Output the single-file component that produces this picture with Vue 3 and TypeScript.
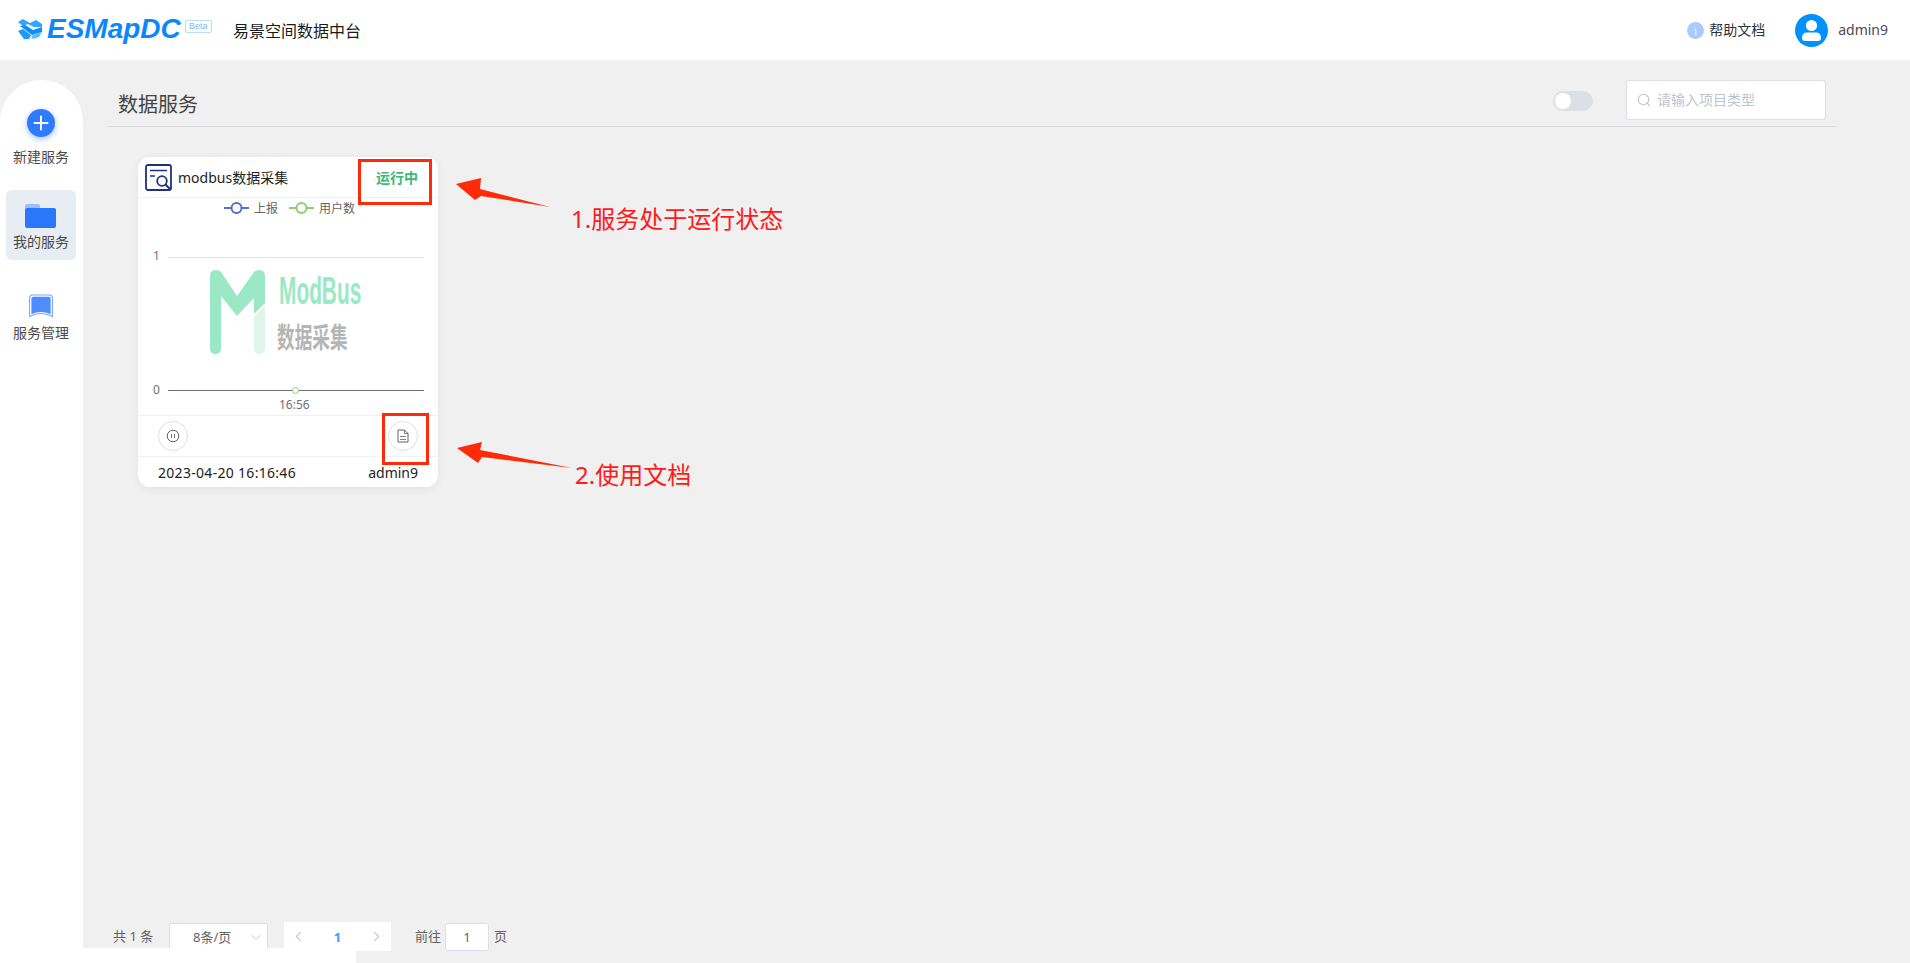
<script setup lang="ts">
const navItems = [
  { key: 'new', label: '新建服务' },
  { key: 'mine', label: '我的服务' },
  { key: 'manage', label: '服务管理' },
]
</script>

<template>
  <div class="page">
    <header class="topbar">
      <div class="brand">
        <svg class="brand-mark" viewBox="0 0 26 22" width="26" height="22">
          <path d="M1 4 L6 1 L13 5 L19 2 L25 6 L25 9 L17 9 L11 6 L6 8 Z" fill="#2fa6ff" />
          <path d="M3 8 L8 7 L16 12 L25 9 L25 14 L15 17 Z" fill="#0d8bff" />
          <path d="M1 13 L6 11 L14 17 L12 21 L7 21 Z" fill="#1c9bff" />
          <path d="M14 18 L25 14 L22 19 L16 21 Z" fill="#52bdff" />
        </svg>
        <span class="brand-name">ESMapDC</span>
        <span class="brand-beta">Beta</span>
      </div>
      <span class="brand-title">易景空间数据中台</span>
      <div class="topbar-right">
        <span class="help">
          <span class="help-dot">i</span>
          <span class="help-text">帮助文档</span>
        </span>
        <svg class="avatar" viewBox="0 0 33 33" width="33" height="33">
          <circle cx="16.5" cy="16.5" r="16.5" fill="#0090ff" />
          <circle cx="16.5" cy="11.5" r="5.6" fill="#fff" />
          <path d="M7 24 Q7 18.500 12 18.500 H21 Q26 18.500 26 24 Q26 27 23 27 H10 Q7 27 7 24 Z" fill="#fff" />
        </svg>
        <span class="user">admin9</span>
      </div>
    </header>

    <div class="body">
      <aside class="sidebar">
        <div
          v-for="item in navItems"
          :key="item.key"
          class="nav-item"
          :class="['nav-' + item.key, { active: item.key === 'mine' }]"
        >
          <span v-if="item.key === 'new'" class="plus">
            <svg viewBox="0 0 16 16" width="16" height="16">
              <path d="M8 1.500 V14.500 M1.500 8 H14.500" stroke="#fff" stroke-width="2" stroke-linecap="round" />
            </svg>
          </span>
          <svg v-else-if="item.key === 'mine'" viewBox="0 0 32 24" width="32" height="24">
            <path d="M0 2 Q0 0 2 0 H13 Q15 0 15 2 V6 H0 Z" fill="#9dbdf9" />
            <rect x="0" y="4" width="31" height="20" rx="2" fill="#2b77fb" />
          </svg>
          <svg v-else viewBox="0 0 26 24" width="26" height="24">
            <path d="M1.600 4 Q1.600 1 4.600 1 H21.400 Q24.400 1 24.400 4 V22.600 Q18 19.500 13 19.500 Q8 19.500 1.600 22.600 Z" fill="none" stroke="#7aa5fc" stroke-width="1.100" />
            <path d="M3.400 4.500 Q3.400 2.800 5 2.800 H21 Q22.600 2.800 22.600 4.500 V20.300 Q17.500 18 13 18 Q8.500 18 3.400 20.300 Z" fill="#4f8dff" />
          </svg>
          <span class="nav-label">{{ item.label }}</span>
        </div>
      </aside>

      <main class="main">
        <div class="titlebar">
          <h1 class="title">数据服务</h1>
          <span class="switch"><span class="switch-knob"></span></span>
          <div class="search">
            <svg viewBox="0 0 14 14" width="14" height="14">
              <circle cx="6.500" cy="6.500" r="5.200" fill="none" stroke="#c0c4cc" stroke-width="1.100" />
              <path d="M10.300 10.300 L12.800 12.800" stroke="#c0c4cc" stroke-width="1.100" stroke-linecap="round" />
            </svg>
            <span class="search-text">请输入项目类型</span>
          </div>
        </div>

        <div class="cards">
          <article class="card">
            <div class="card-head">
              <svg viewBox="0 0 27 27" width="27" height="27">
                <rect x="1" y="1" width="25" height="25" rx="2" fill="none" stroke="#20307e" stroke-width="1.800" />
                <path d="M5 6.500 H22 M5 12 H10" stroke="#20307e" stroke-width="1.600" />
                <circle cx="17" cy="17" r="4.800" fill="none" stroke="#20307e" stroke-width="1.800" />
                <path d="M20.500 20.500 L25 25" stroke="#20307e" stroke-width="2" />
              </svg>
              <span class="card-name">modbus数据采集</span>
              <span class="card-status">运行中</span>
            </div>

            <div class="legend">
              <span class="legend-item">
                <svg viewBox="0 0 25 12" width="25" height="12">
                  <path d="M0 6 H25" stroke="#5470c6" stroke-width="2" />
                  <circle cx="12.500" cy="6" r="5" fill="#fff" stroke="#5470c6" stroke-width="2" />
                </svg>
                上报
              </span>
              <span class="legend-item">
                <svg viewBox="0 0 25 12" width="25" height="12">
                  <path d="M0 6 H25" stroke="#91cc75" stroke-width="2" />
                  <circle cx="12.500" cy="6" r="5" fill="#fff" stroke="#91cc75" stroke-width="2" />
                </svg>
                用户数
              </span>
            </div>

            <div class="chart">
              <div class="axis-row axis-top">
                <span class="axis-num">1</span>
                <span class="grid-line"></span>
              </div>
              <div class="watermark">
                <svg viewBox="0 0 55 84" width="55" height="84">
                  <path d="M55 36 V78 Q55 84 49.500 84 Q44 84 44 78 V47 Z" fill="#dff5ea" />
                  <path d="M0 6 Q0 0 6 0 Q9 0 11 2 L27 26 L44 2 Q46 0 49 0 Q55 0 55 6 V33 L44 44 V28 L27 46 L11 26 V78 Q11 84 5.500 84 Q0 84 0 78 Z" fill="#9be8c6" />
                </svg>
                <div class="watermark-text">
                  <span class="wm-en">ModBus</span>
                  <span class="wm-cn">数据采集</span>
                </div>
              </div>
              <div class="axis-row axis-bottom">
                <span class="axis-num">0</span>
                <span class="base-line"><span class="point"></span></span>
              </div>
              <div class="axis-time">16:56</div>
            </div>

            <div class="card-actions">
              <span class="round-btn">
                <svg viewBox="0 0 14 14" width="14" height="14">
                  <circle cx="7" cy="7" r="5.800" fill="none" stroke="#606266" stroke-width="1" />
                  <path d="M5.500 5 V9 M8.500 5 V9" stroke="#606266" stroke-width="0.900" />
                </svg>
              </span>
              <span class="round-btn">
                <svg viewBox="0 0 12 14" width="12" height="14">
                  <path d="M1 1 H7.500 L11 4.500 V13 H1 Z" fill="none" stroke="#606266" stroke-width="1" />
                  <path d="M7.500 1 V4.500 H11 M3 7.500 H9 M3 10.500 H9" fill="none" stroke="#606266" stroke-width="0.800" />
                </svg>
              </span>
            </div>

            <div class="card-foot">
              <span class="card-date">2023-04-20 16:16:46</span>
              <span>admin9</span>
            </div>
          </article>
        </div>

        <div class="pagination">
          <span class="total">共 1 条</span>
          <span class="size-select">
            8条/页
            <svg viewBox="0 0 12 8" width="10" height="7">
              <path d="M1 1.500 L6 6.500 L11 1.500" fill="none" stroke="#c0c4cc" stroke-width="1.100" />
            </svg>
          </span>
          <span class="pager">
            <svg viewBox="0 0 8 12" width="7" height="11">
              <path d="M6.500 1 L1.500 6 L6.500 11" fill="none" stroke="#c0c4cc" stroke-width="1.300" />
            </svg>
            <b class="pager-current">1</b>
            <svg viewBox="0 0 8 12" width="7" height="11">
              <path d="M1.500 1 L6.500 6 L1.500 11" fill="none" stroke="#c0c4cc" stroke-width="1.300" />
            </svg>
          </span>
          <span class="jump">前往</span>
          <span class="jump-input">1</span>
          <span class="jump-unit">页</span>
        </div>
      </main>
    </div>

    <div class="bottom-strip"></div>

    <!-- Annotations painted over the screenshot -->
    <div class="mark mark-status"></div>
    <div class="mark mark-doc"></div>
    <svg class="arrows" viewBox="0 0 1910 963" width="1910" height="963">
      <path d="M456 184 L481 178 L480 189 L550 207 L481 196 L475 200 Z" fill="#ff2a08" />
      <path d="M457 448 L482 442 L480 450 L572 468 L482 457 L478 463 Z" fill="#ff2a08" />
    </svg>
    <span class="note note-status">1.服务处于运行状态</span>
    <span class="note note-doc">2.使用文档</span>
  </div>
</template>

<style>
html,
body {
  margin: 0;
  overflow: hidden;
  background: #f0f0f0;
}
</style>

<style scoped>
.page {
  position: relative;
  display: flex;
  flex-direction: column;
  height: 963px;
  overflow: hidden;
  background: #f0f0f0;
  font-family: "Noto Sans", "Noto Sans CJK SC", sans-serif;
  color: #303133;
}

.topbar {
  display: flex;
  align-items: center;
  flex: none;
  height: 60px;
  padding: 0 22px 0 17px;
  background: #fff;
  box-sizing: border-box;
}
.brand {
  display: flex;
  align-items: center;
  height: 60px;
  width: 216px;
}
.brand-mark {
  flex: none;
  margin-top: -2px;
}
.brand-name {
  margin-left: 4px;
  font-family: "Liberation Sans", sans-serif;
  font-size: 28px;
  line-height: 30px;
  font-weight: 700;
  font-style: italic;
  color: #0b87fb;
  margin-top: -2px;
}
.brand-beta {
  align-self: flex-start;
  margin: 20px 0 0 4px;
  width: 25px;
  height: 11px;
  border: 1px solid #b9dcff;
  border-radius: 2px;
  font-family: "Liberation Sans", sans-serif;
  font-size: 9px;
  line-height: 11px;
  text-align: center;
  color: #7db9f5;
  box-sizing: content-box;
}
.brand-title {
  font-size: 16px;
  color: #1a1a1a;
}
.topbar-right {
  display: flex;
  align-items: center;
  margin-left: auto;
}
.help {
  display: flex;
  align-items: center;
  gap: 5px;
  font-size: 14px;
  color: #303133;
}
.help-text {
  margin-top: -2px;
}
.help-dot {
  width: 17px;
  height: 17px;
  border-radius: 50%;
  background: #a9caff;
  color: #e8f1ff;
  font-family: "Liberation Serif", serif;
  font-size: 13px;
  line-height: 17px;
  text-align: center;
}
.avatar {
  margin-left: 30px;
}
.user {
  margin-left: 10px;
  margin-top: -2px;
  font-size: 14px;
  color: #4a4a55;
}

.body {
  display: flex;
  flex: 1;
  min-height: 0;
}

.sidebar {
  display: flex;
  flex-direction: column;
  align-items: center;
  flex: none;
  width: 83px;
  margin-top: 20px;
  padding: 29px 1px 0 0;
  box-sizing: border-box;
  background: #fff;
  border-radius: 42px 42px 0 0;
}
.nav-item {
  display: flex;
  flex-direction: column;
  align-items: center;
  width: 70px;
  box-sizing: border-box;
  border-radius: 6px;
}
.nav-new {
  height: 81px;
}
.nav-mine {
  height: 70px;
  padding-top: 14px;
  background: #e8ecf3;
}
.nav-manage {
  margin-top: 34px;
}
.plus {
  display: flex;
  align-items: center;
  justify-content: center;
  width: 28px;
  height: 28px;
  border-radius: 50%;
  background: #2f7bff;
  box-shadow: 0 2px 6px rgba(47, 123, 255, 0.45);
}
.nav-label {
  font-size: 14px;
  line-height: 20px;
  color: #4a4a4a;
}
.nav-new .nav-label {
  margin-top: 10px;
}
.nav-mine .nav-label {
  margin-top: 4px;
}
.nav-manage .nav-label {
  margin-top: 5px;
}

.main {
  display: flex;
  flex-direction: column;
  flex: 1;
  min-width: 0;
  padding: 20px 74px 0 25px;
  box-sizing: border-box;
}
.titlebar {
  display: flex;
  align-items: center;
  flex: none;
  height: 47px;
  padding: 0 10px 0 10px;
  border-bottom: 1px solid #d9dbdf;
  box-sizing: border-box;
}
.title {
  margin: 0 auto 0 0;
  font-size: 20px;
  line-height: 28px;
  font-weight: 400;
  color: #444;
  transform: translateY(2px);
}
.switch {
  display: flex;
  align-items: center;
  width: 40px;
  height: 20px;
  margin-top: -4px;
  border-radius: 10px;
  background: #dcdfe6;
}
.switch-knob {
  width: 16px;
  height: 16px;
  margin-left: 2px;
  border-radius: 50%;
  background: #fff;
}
.search {
  display: flex;
  align-items: center;
  gap: 6px;
  width: 200px;
  height: 40px;
  margin-left: 33px;
  margin-top: -7px;
  padding-left: 10px;
  background: #fff;
  border: 1px solid #dcdfe6;
  border-radius: 3px;
  box-sizing: border-box;
  font-size: 14px;
  color: #c0c4cc;
}
.search-text {
  margin-top: -2px;
}

.cards {
  flex: 1;
  padding: 30px 0 0 30px;
}
.card {
  display: flex;
  flex-direction: column;
  width: 300px;
  height: 330px;
  background: #fff;
  border-radius: 12px;
  box-shadow: 0 2px 8px rgba(0, 0, 0, 0.06);
}
.card-head {
  display: flex;
  align-items: center;
  flex: none;
  height: 40px;
  padding: 0 20px 0 7px;
  border-bottom: 1px solid #eef0f3;
}
.card-name {
  margin-left: 6px;
  font-size: 14px;
  color: #222;
}
.card-status {
  margin-left: auto;
  font-size: 14px;
  font-weight: 700;
  color: #3cb878;
}
.legend {
  display: flex;
  justify-content: center;
  gap: 11px;
  height: 20px;
  align-items: center;
  padding-left: 3px;
}
.legend-item {
  display: flex;
  align-items: center;
  gap: 5px;
  font-size: 12px;
  color: #666;
}
.chart {
  flex: 1;
  min-height: 0;
  display: flex;
  flex-direction: column;
  padding: 0 14px 0 15px;
}
.axis-row {
  display: flex;
  align-items: center;
  flex: none;
}
.axis-top {
  height: 20px;
  margin-top: 29px;
}
.axis-top .axis-num {
  margin-top: -2px;
}
.axis-num {
  width: 15px;
  font-size: 12px;
  line-height: 14px;
  color: #6e7079;
}
.grid-line {
  flex: 1;
  height: 1px;
  background: #e0e6f1;
}
.base-line {
  position: relative;
  flex: 1;
  height: 1px;
  background: #6e7079;
}
.point {
  position: absolute;
  left: 124px;
  top: -3px;
  width: 5px;
  height: 5px;
  border-radius: 50%;
  background: #fff;
  border: 1.5px solid #91cc75;
  box-sizing: content-box;
}
.watermark {
  display: flex;
  align-items: flex-start;
  flex: none;
  height: 113px;
  margin-top: 3px;
  padding-left: 57px;
}
.watermark-text {
  display: flex;
  flex-direction: column;
  margin-left: 12px;
  width: 90px;
}
.wm-en {
  display: block;
  margin: 1px 0 0 2px;
  font-family: "Liberation Sans", sans-serif;
  font-size: 39px;
  line-height: 40px;
  font-weight: 700;
  color: #9be8c6;
  transform: scaleX(0.535);
  transform-origin: left center;
  white-space: nowrap;
}
.wm-cn {
  display: block;
  margin-top: 10px;
  font-size: 28px;
  line-height: 32px;
  font-weight: 700;
  color: #b5b5b5;
  transform: scaleX(0.63);
  transform-origin: left center;
  white-space: nowrap;
}
.axis-bottom {
  height: 14px;
}
.axis-time {
  padding-left: 126px;
  font-size: 12px;
  line-height: 16px;
  color: #6e7079;
}
.card-actions {
  display: flex;
  align-items: center;
  justify-content: space-between;
  flex: none;
  height: 42px;
  padding: 0 20px;
  border-top: 1px solid #eef0f3;
  border-bottom: 1px solid #eef0f3;
  box-sizing: border-box;
}
.round-btn {
  display: flex;
  align-items: center;
  justify-content: center;
  width: 30px;
  height: 30px;
  border: 1px solid #dcdfe6;
  border-radius: 50%;
  box-sizing: border-box;
}
.card-foot {
  display: flex;
  justify-content: space-between;
  align-items: center;
  flex: none;
  height: 30px;
  padding: 0 20px;
  font-size: 14px;
  color: #222;
}
.card-date {
  letter-spacing: 0.3px;
}

.pagination {
  display: flex;
  align-items: flex-start;
  flex: none;
  height: 41px;
  padding-left: 5px;
  font-size: 13px;
  line-height: 28px;
  color: #606266;
}
.total {
  width: 56px;
}
.size-select {
  display: flex;
  align-items: center;
  justify-content: space-between;
  width: 99px;
  height: 40px;
  padding: 0 6px 12px 23px;
  margin-top: 1px;
  background: #fff;
  border: 1px solid #dcdfe6;
  border-radius: 3px;
  box-sizing: border-box;
}
.pager {
  position: relative;
  z-index: 3;
  display: flex;
  align-items: center;
  justify-content: space-between;
  width: 107px;
  height: 29px;
  margin-left: 16px;
  padding: 0 11px;
  background: #fff;
  box-sizing: border-box;
}
.pager-current {
  font-size: 13px;
  color: #409eff;
}
.jump {
  margin-left: 24px;
}
.jump-input {
  position: relative;
  z-index: 3;
  width: 44px;
  height: 28px;
  margin: 1px 0 0 4px;
  background: #fff;
  border: 1px solid #dcdfe6;
  border-radius: 3px;
  box-sizing: border-box;
  line-height: 26px;
  text-align: center;
}
.jump-unit {
  margin-left: 5px;
}

.bottom-strip {
  position: absolute;
  left: 0;
  bottom: 0;
  z-index: 2;
  width: 356px;
  height: 15px;
  background: #fff;
}

.mark {
  position: absolute;
  z-index: 5;
  border: 3px solid #ff2a08;
  box-sizing: border-box;
}
.mark-status {
  left: 358px;
  top: 159px;
  width: 74px;
  height: 46px;
}
.mark-doc {
  left: 382px;
  top: 413px;
  width: 47px;
  height: 52px;
}
.arrows {
  position: absolute;
  left: 0;
  top: 0;
  z-index: 5;
  pointer-events: none;
}
.note {
  position: absolute;
  z-index: 5;
  font-size: 24px;
  line-height: 32px;
  color: #ff1a1a;
  white-space: nowrap;
}
.note-status {
  left: 571px;
  top: 203px;
}
.note-doc {
  left: 575px;
  top: 459px;
}
</style>
